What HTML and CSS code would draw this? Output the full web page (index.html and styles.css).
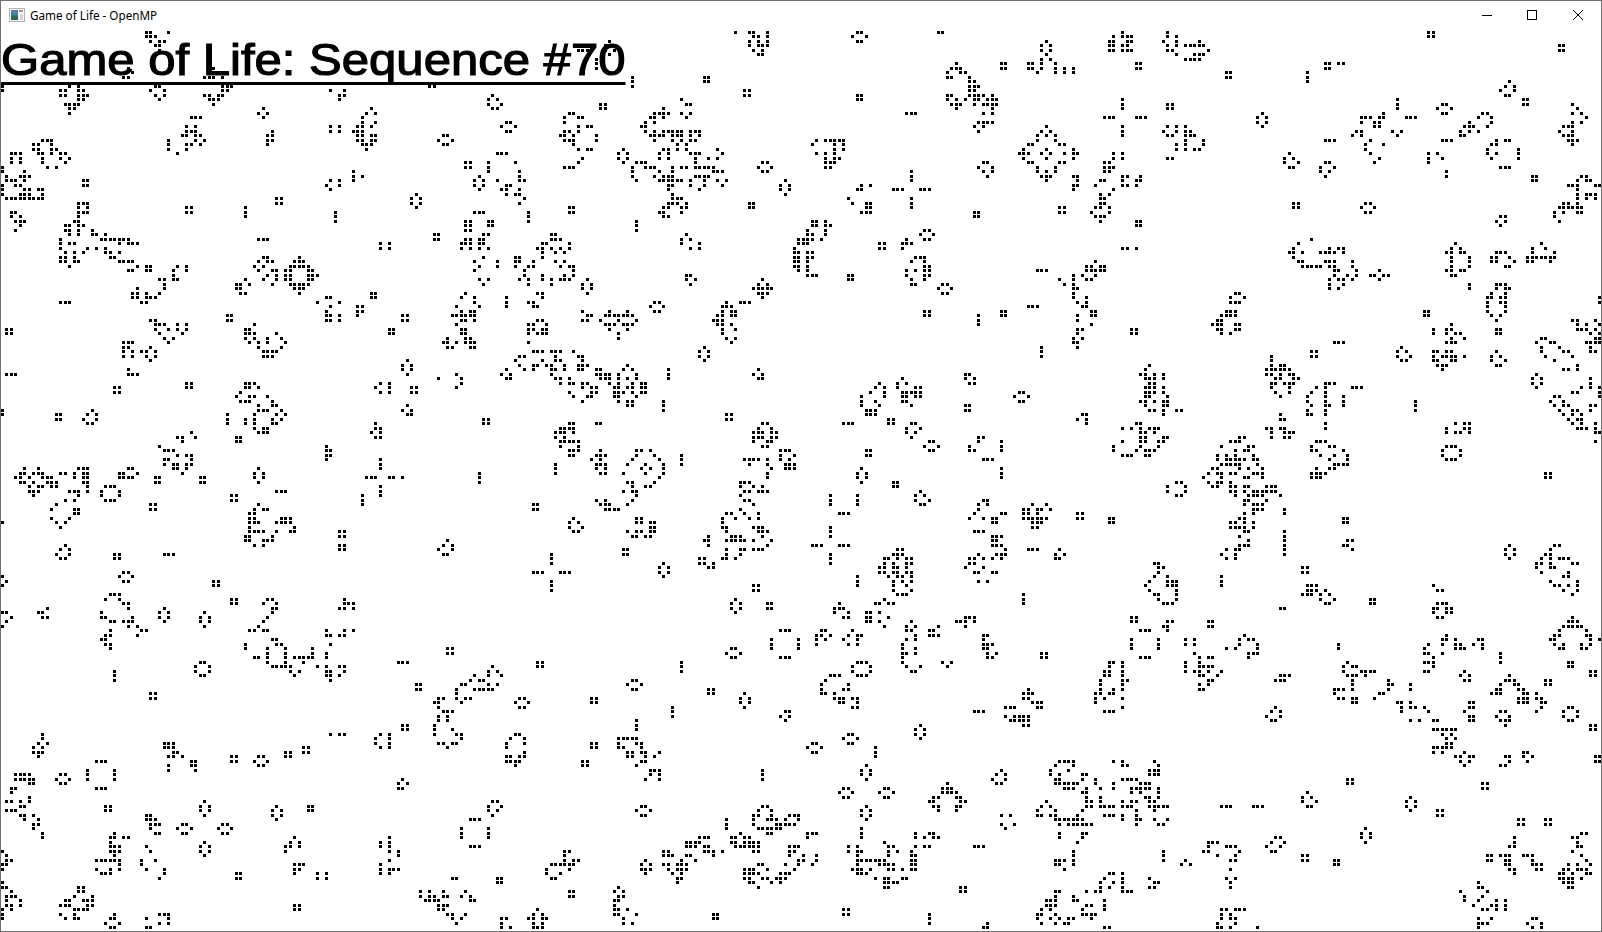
FILE: index.html
```html
<!DOCTYPE html>
<html lang="en">
<head>
    <meta charset="UTF-8">
    <title>Game of Life - OpenMP</title>
    <link rel="stylesheet" href="styles.css">
</head>
<body>
    <div class="window">
        <div class="titlebar">
            <svg class="app-icon" width="16" height="16" viewBox="0 0 16 16">
                <rect x="0.5" y="1.5" width="15" height="13" fill="#f4f4f4" stroke="#b4b4b4"/>
                <rect x="2" y="3" width="7" height="10" fill="#3c7f80"/>
                <rect x="2" y="3" width="7" height="4" fill="#5a7fa8"/>
                <rect x="2" y="9" width="7" height="4" fill="#2f6a55"/>
                <rect x="10" y="3" width="4" height="2" fill="#8a9aa8"/>
                <rect x="11" y="7" width="3" height="6" fill="#d4d4d4"/>
            </svg>
            <span class="window-title">Game of Life - OpenMP</span>
            <div class="controls">
                <svg width="10" height="10" viewBox="0 0 10 10"><path d="M0 5.5H10" stroke="#000" fill="none"/></svg>
                <svg width="10" height="10" viewBox="0 0 10 10"><rect x="0.5" y="0.5" width="9" height="9" stroke="#000" fill="none"/></svg>
                <svg class="close" width="10" height="10" viewBox="0 0 10 10"><path d="M0 0L10 10M10 0L0 10" stroke="#000" stroke-width="1" fill="none"/></svg>
            </div>
        </div>
        <div class="stage">
            <canvas id="board" width="1600" height="900"></canvas>
            <h1 class="heading">Game of Life: Sequence #70</h1>
        </div>
    </div>
    <script src="cells.js"></script>
</body>
</html>
```

FILE: styles.css
```css
html, body {
    margin: 0;
    padding: 0;
    background: #fff;
    overflow: hidden;
}
.window {
    width: 1602px;
    height: 932px;
    box-sizing: border-box;
    border: 1px solid #707070;
    display: flex;
    flex-direction: column;
    background: #fff;
}
.titlebar {
    height: 30px;
    box-sizing: border-box;
    padding: 0 0 2px 8px;
    display: flex;
    align-items: center;
    font-family: "Noto Sans", sans-serif;
    font-size: 11.7px;
    color: #000;
}
.app-icon {
    margin-right: 5px;
}
.controls {
    margin-left: auto;
    display: flex;
    gap: 35px;
    padding-right: 18px;
}
.controls svg {
    display: block;
}
.controls .close {
    margin-left: 1px;
}
.stage {
    position: relative;
    width: 1600px;
    height: 900px;
}
#board {
    display: block;
}
.heading {
    position: absolute;
    left: 0;
    top: 3px;
    margin: 0;
    font-family: "Liberation Sans", Arial, sans-serif;
    font-size: 45px;
    font-weight: normal;
    line-height: 52px;
    color: #000;
    -webkit-text-stroke: 1.2px #000;
    text-decoration: underline;
    text-decoration-thickness: 3px;
    text-underline-offset: 7px;
    text-decoration-skip-ink: none;
    white-space: nowrap;
    transform: scaleX(1.09);
    transform-origin: left top;
}
```

FILE: cells.js
```js
// live cells as read off the reference, one block per 534x451 crop
// each entry is "rows:cols", both in crop pixels, every row gets every col
var KX = 2.936, KY = 3;
var PITCH = 4.5, COLS = 356, ROWS = 200;

var crops = [
{ x: 0, y: 30, d: `5:433,445,500 20:433,445,460 33:445,470,485 47:460,472 60:472 113:378 128:390 142:365,378 113:632 142:605,618,632,658
170,183:5 170:207,234 183:180,193,234,247 196:180,193,234,247,260 210:234,247 223:193,207,220,234 237:207,220 250:207
170:460,472 183:445,485 196:460,485 210:472 170:658,672,685 183:658,672 196:605,618,645,658 210:618,632,645 223:632
183:978,1005 196:992,1005 210:992 170:1258,1270 196:1443 210:1430,1458 223:1430,1470 237:1443,1458 237:778 250:765,792 264:778
237:1085 250:1072,1098 264:1058 278:1058,1098 291:1045,1058,1085 305:1032,1045,1058 318:1045,1058,1085,1098 332:1045,1058,1085,1098 345:1058,1072,1085 358:1072
264:565,578,592 291:552,578 305:552,565,578 318:538,552,578,592 332:578,605 345:552,565,592 358:552 332,345,358:500 372:526 291,305:978,992
305:805 318:792,805 332:792,805 345:792 277:1483,1497 291:1470,1510 305:1483,1497 318:1297,1310 332:1283,1323 345:1297,1310
332:128,141,155 345:101,114,155 358:101,114,155,168 372:114,128,155,181,194 385:128,181,207 399:128,194 412:141,168 372:35,48,62 385:35,62 399:35,62
372:1458,1470,1484 399,412:1365,1378 399,412,425:1431 399:1510 412,425:5 425:75 438:22,62,75,88 452:22,35,48,75 465:48,62 478:75,88,114,128 492:62,75,88,128 507:22,35,48,62,75,88,101,114,128
465,478,492:5 452,465:248,260 425:1044 438:1032,1058 452:1044 452:978,992 465:965,992 481:978 425,438:1522 452:1522,1535
438:1403 452:1390,1418,1458 465:1390,1418,1484,1497 481:1403,1470,1484,1522 492:1484,1510,1522 507:1535 520:1522 507,520:818,832 492:1217 507,520:1205,1232 535:1217
520:234,247,260 535:234,260 548:234,247,260 562:234 575:220,234 590:194,207,234,247 602:194,207,234,273 617:207,234,273,286,312 628:181,300,312,326,339,352,365,378 642:181,207,220,352,378,392,405 655:181,260,286,312 670:194,220,247,312,326,352 683:181,194,220,326,339 697:181,194,220,234,352,365,378,392 710:207,405
548:35,48 562:35,62 575:48,62,75 590:62 602:48 535,548:552,565 535,548,562:726 548,562,575:990 548:1390,1403,1417 548,562,575:1548
575,590,602:1365,1378 575,590:1431,1444 617,628:1270,1283 617:1418,1431 628:1365,1378,1405,1418 642:1352,1365,1378,1405,1418 655:1352,1378,1405,1431 628:765,778,792 642,655:1123,1137
683:778,792,885 697:765,792,805,871,885,898 710:752,778,858,871,885,898,912 724:765,805,818,845,858,912,925 737:792,818,845,858,912,925,938 750:778,818,845,858,912,925 763:805,858,871,885,898,912 777:871,885,898 790:885
750:726 763:698,712,738 777:698,712 790:712,726 683:1510,1522 697:1510,1522,1560 710:1510,1548,1560 724:1535 737:1535 750:1522,1548 763:1548 683:1417 697:1390 697,710:1457 710:1403 724:1390 750:1403,1431 763:1417
710:525,552 724:512,552 737:512 750:472,485,512,525 763:485 777:485 790:472 777:405 790:392,405,432 804:392,405,432,445,458 817:418,432 710:432,445 724:378,392,432,445 790,804:1085,1098 817:181,194,207
804:965,978 817:938,992 832:978 845:952 858:952,978,992 871:965,978,992 832,845:1045,1058 858:1045 790:1364 804:1350,1390 817:1390 832:1337,1403 845:1350,1377,1390 858:1324,1337,1350,1364,1377,1390 871:1350,1364,1390
885:1337 898:1350,1364 912:1350,1364 925:1310,1364,1377 940:1297,1310,1337,1364,1377,1390 952:1310,1324,1377,1390 804,817,832:1484 817:1548,1560 832:1560 858,871:672,685 858,871:1178,1190 898,912:22,35 898,912:1137,1150
871:445,458 885:458,472,485,526,552 898:458,498,526,552 912:472,538 925:485,512 940:498 885:752 898:726,738 912:726,738,752,818 925:726,752,792,832 940:738,765,792,845 952:765,832 966:778,792,805,818 979:778,792,805
885,898:1548,1560 912:1548 940:1548 940:365,378,392 952:365,378,445 966:365,392,418,432,458 979:365,392,432,458 993:445 979:1522,1535 966:1560 993:1510 1006:1522,1560 1020:1535,1560
993:1190 1006,1020:1178,1205 1033:1190 1020:378 1033:378,392,405 1033:22,35,48 1020:1484 1033:1470,1497 1047:1484,1497 1033:1337 1047:1350,1284 1060:1350 1075:1337 1060,1075:552,565
1060:726,738,752 1075:726,738,765 1089:712 1102:698,738,752,792 1115:712,726,738,805 1130:765,805,818 1142:765,778,792,832 1156:672,752,818,845 1170:672,726,752,805,832 1183:672,726,752,805,818 1196:752,778,792 1210:765,778,792
1060:1123,1137 1075:1110,1150 1089:1123,1137 1075,1089:1205,1217 1075,1089:340,352 1142,1156:5 1156,1170:165,180 1142:273 1156:260,286 1170:247,286 1183:260,273 1128:1190 1142:1178,1205 1156:1190,1205 1170,1183:1418,1431
1183:1110 1196:1098,1123 1210:1085,1123 1222:1098,1110 1210:565 1222:526,538,578 1237:538 1222,1237:698,712 1250:472 1264:485,498,512 1277:526,552,565 1290:485,498,565 1303:485,512,526,552,565 1317:512,526,552 1330:538
1250:965 1264,1277:952,978 1290:965 1290,1303,1317:1123 1317:75,114 1330:62,75,101,114,128 1345:48,62,88,128,141,155 1330:180,194,220,248,260 1317:234,248,260 1345:220,248,260 1317:378,392 1330:352,365,405 1345:352,365,378,392 1345:458,472,592,605
1317:765 1330,1345:752,778 1345:1072,1085,1098,1150,1163,1178 1330,1345:1402` },

{ x: 534, y: 30, d: `5:595,632,645,685 20:645,658,685 33:632,658,685 47:632,658,672,685 60:645,672 75:658,672 5:952,965 20:938,978 33:952,965 5:1190,1205
35:221 48:208,233 60:127,141,155,208,233 75:221 87,100,113:180 140,155,168:286 140,155:500,513 183,196:620,632 196,210:952,965 223,237:195,208
100:1243 113:1230,1243,1258 128:1217,1258,1270 142:1217,1230,1283 156:1283,1297 170:1283,1297,1310 183:1283,1297 196:1217,1230,1283,1297,1310,1324,1352 210:1217,1243,1270,1297,1310,1337,1352,1365 223:1230,1243,1258,1297,1324,1337,1352,1365 237:1243,1352 250:1324,1352 277:1310,1324,1337,1352 291:1297,1324 304:1310 250:1098,1110,1125
33:1510 47,60:1497,1524 75:1510 87:1497,1524 100:1458,1470,1497,1537 113:1458,1470,1497,1537,1563 128:1484,1537,1563 100,113:1378,1390
210:432 223:445,458 237:378 250:352,365,378,392,432,458 264:340,352,378,445 277:326,352 291:312,326 304:326,352,378,392,405,418,432,458,472,485 318:340,352,365,378,405,418,432,458,485 332:352,405,432,458,472 345:418,445 358:378,392,418,445,538 372:365,392,458,472,485,552 385:365,392,472,512,538 399:300,312,326,472 412:286,326,340,352,405,432,445,472,485,498,512,526 425:286,365,405,526,538,552 438:286,352,378,392,405,472,485,498,512 452:300,365,378,392,405,418,432,458,498,538,565 465:392,405,458,498,552 481:392,485 492:405 507:405,418,432 520:392,405,418,445 535:378,392,432,445 548:365,378,432 562:378,392
358:260 372,385:247,273 399:260
250:101,114 264:88,128,141 277:88 291:128,155,168 304:88,101,128 318:75,88,114,180 332:88,101,114,180 345:114 358:128,155,168 385:141 399:128 412:88,101,114
332:832,858,871,885,898,912 345:818,885,912 358:885,912 372:832,858,885 385:858,885,898 399:858,871,885 412:858,871 399:672,685 412:658,698 425:672,685 399:1324,1337 412:1310,1350 425:1324,1350 438:1337
291:1510 304:1497,1524 318:1484,1510,1537 332:1484,1537 345:1458,1470,1550,1563 358:1444,1510 372:1431,1444,1458,1497,1524,1563 385:1444,1510 399:1458,1470,1550,1563 412:1484,1537 425:1484,1510,1537 438:1497,1510,1524 452:1510
425,438,452:1110 481:1058,1072,1085,1137,1150,1165 507,520,535:1110 452:738 465,481:725,752 492:738 465:965,992 481:952,965 507:925 520:938,978,992 535:978,992 548:965,978,992 520,535:632,645 535,548:101,114 548,562:1297,1310 535,548:1550,1563 575,590,602:300
575:818,832,858 590:818,832,858,871 602:805,858 617:805,818,858 628:778,792,805,818,845 642:778,792,805 655:765 670:765,778,805,818 683:765,778,805,818 697:765,778,805 710:765,778,805 724:778,805 737:805,818,832
602:1150,1165 617:1137,1178 628:1098,1150,1165 642:1085,1098,1110 655:1085 642,655:1018,1032
617:48,62 628:48,62,75 642:22,35,101 655:8,22,48,75,101 670:22,62,88 683:22 697:62,88 710:75,101,114 724:114 737:22,88,114 750:22,48,75,88,101 763:48 617:445 628:432,458 642:432,485 655:458,485
683:1125,1137,1150 697:1110,1150 710:1150,1165 724:1098,1125,1150,1165 737:1098,1150,1165 750:1110,1150 763:1110,1125 737,750:925,938 724:1484,1497,1510 750:1550 763:1563 737:445,458 750:445,472 763:458
750:155 763,777:141,168 790:155 750:672 763:658,685 777:645,658,672,685,698 790:658,672,685 804:672 763:1205,1217 777:1190,1232 790:1205,1217 790:8,22 804:22 832:8
817:568,605,618,632 832:552,565,578 845:552,578,592 858:538,552,578,592 871:525,538,552 885:538,552,578 898:552,592 912:552 925:565,592 940:578 817:352,365 832:340,378 845:352,365 845,858:1150,1163 845,858:1378,1390 832:1458,1470,1484 858,871,885:1310
845:141,220,273 858:155,168,205,220,234,247,260,273,286 871:141,155,194,247,300 885:205,220,234,260,273,286 898:220,273 912,925:247 871:8,22 885:35 898:22,35 912:8,22,35
952:500 966,979:487,513 993:500 952,966,979:1497 966:8,22,48,62,75,115 979:62,128,141 993:22,62,75,141 1006:8,35,48,88,128,141,155 1020:48,62,88,128,141 1033:48 1047:62,75,101 1060:75,101,115,141,155 1075:141,168,180 1089:101,168,180 1102:115,155,168 1115:141
1006:273 1020:180,194,260,286 1033:180,194,207,220,247,300 1047:194,207,220,247,273,300 1060:220,247,285,312,326 1075:234,247,273,285,312,326 1089:234,247,260,285,312,326 1102:234,247,300 1115:247,273,285 1130:273,285 1020,1033,1047:393 1020:658 1033:645,672 1047:658,672
1033:1272,1285 1047:1272,1297 1060:1285,1297 1060:1018 1075:1005,1032 1089:992,1032 1102:965,1032 1115:965,1005 1130:965,1018 1142:978,992,1005 1156:978,992,1005
1047:1085 1060:1072,1098 1075:1072,1125,1137 1089:1085,1098,1110,1125,1137 1102:1085,1098,1125,1137 1115:1085,1098 1130:1110 1089:1430,1444 1102:1417,1457 1115:1430,1444 1130,1142:1272,1285 1115,1130,1142:380 1156,1170:568,580 1170,1183:1045,1058
1183:180,194,101,114 1196:75,88,101,114 1210:62,75,88,114 1222:62,88 1237:75,88,101,114,128 1250:75,128 1264:101,114,128 1277:101,114 1183:672,685 1196:658,698 1210,1222:645,658,672,698,712 1237:645,685,698 1250:672,685 1183:912,925,938
1183:1110,1125 1196:1098,1137 1210:1098,1125 1222:1110 1222:1310,1324 1237:1310,1378 1250:1285,1378 1264:1285,1297,1378 1237:1165,1178 1250:1150,1190 1264:1165,1178
1264:308,322,340 1277:300,352,433 1290,1303:433 1264:195 1277:180,195,208 1290:168,195 1303:180,195,208 1317:180,208 1330:195,208 1290:285,367 1303:272,327,380 1317:312,340,380 1330:260,327,380 1345:367 1303,1317,1330:60
1264:725,738,752 1277:725,765 1290:618,632,645,658,685,725,752 1303:632,685,738,752,765 1317:698,738,752,765 1330,1345:685 1264,1277:978,992 1290:1324,1337,1352 1317:965 1330,1345:952,978 1317,1330,1345:1378` },

{ x: 1068, y: 30, d: `5:168 20:141,155,181,194 33:128,141,181,194 47:128,141,168,181 60:128,141,155,168,181 5:290 20:290,315 33:275,326,380 47:290,326,340,352,367,380,395 60:290,300,408 75:326,367,380,395 87:340,352,367,380
5,20:1058,1072 47,60:1447,1458 100,113:195,208 113,128:10 128,142:462,475 128,142,156:700 100,113:752,765 100:792,805 156:1298 170:1285,1310 183:1272,1310 196:1285,1298 210,223:1340,1352
210,223,237:168 264:115,128,141,195,208,222 291,305,318:168 223,237:290,300 250:568 264,277:553,580 291:568
210,223,237:967 250:925 264:858,872,888,912,925,992,1005,1020 277:858,898,912 291:898,912 305:845,858,952,978 318:832,858,967 332:752,765,780,888 345:872,925 358:872 372:888 385:912 399:898
223:1098,1112 237:1085,1125 250:1098,1112 223:1484 237:1497 250:1484,1510 264:1525 277:1484,1510 291:1458,1470,1484 305:1445,1484 318:1458,1470,1484 332:1470,1484,1497 345:1484
250:1218,1232 264:1205,1245 277:1178,1245 291:1165,1178,1190,1232 305:1152,1178,1205 318:1152,1165 332:1098,1112,1125
291:290,326,340 305:275,326,340,352 318:290,300,340,352,367 332:340,395 345:315,340,395 358:326,352,367,380 332:1258,1285,1298 345:1245,1258 358:1232,1325 372:1232,1258,1325 385:1245,1325 412:1272,1285,1298
358:10 372:10,22 385:10 372:141,155 385:141,168,290,300 399:115,128 412:115,128,141 425:115,128 372:648 385:635,662 399:635,675 412:648,662 399:752,765 412:740,780 425:740,765 438:752
372:1058,1085 385:1058,1098 399:1058 425,438:1112 438,452:1365,1378 438:10,22 452:35 465:10,35 481:22
438:168,181,208 452:101,115,168,195,208 465:88,155,168,195 481:141 492:101,128 507:101,115 520:101,115 535:88,101,128 548:75,128 562:88,101,115 575:101
438:1510,1525 452:1497,1525,1538 465:1470,1484,1497,1550,1563 481:1497 492:1497,1525,1538,1550 507:1497,1525,1550 520:1458,1470,1497 535:1445,1458,1470,1484,1497,1510 548:1430,1458,1497,1510 562:1430 575:1445
520,535:662,675 520:872,885 535:858,898 548:872,885 562:1270,1285 575:1258,1285 590:1270 575,590:195,208
628:715 642:675 655:662,768,792,805 670:648,662,688,740,752,768,780,805 683:662 697:675,688,752,768,780,832 710:688,700,715,727,740,768,780,832 724:780,795,845,912 737:780,820,845,885,900,925,940 750:768,795,805,832,912 763:768,805 777:768,795 655:168,181,195
642:1140 655:1125,1152 670:1112,1125,1152,1165 683,697,710:1125,1178 724:1112,1125,1152,1165 737:1125,1140 670:1258,1272,1285 683:1245,1258,1298 697:1245,1258,1310 710:1285,1298
642:1392 655:1365,1405 670:1365,1430 683:1350,1365,1378,1392,1405,1418,1430 697:1350,1365,1418
697:88 710:62,75,101,115 724:62,75,88,101,115 737:10,48,88 750:22,62,75 763:22 777:22,35 790:22 804:22,62 817:35,62 832:48,62 845:75,88 858:35,75,88 871:35 885:75 898:35,48 912:35 925:22,48 940:22,35 952:35
763,777:1178 763:1258,1272,1285 777:1258,1285,1298 790:1245,1285 804:1232,1245,1272,1285 817:1232,1272,1285 832,845:1232,1285 858:1245,1272 871:1258
790:488,500 804:475,515 817:475,488,500 845:462,475,488 858:448,462,475,488 871:435,448 885:422,435,448,488,500 898:435,448,488,500 912:448,475 845,858:1045,1058 898,912:182,195 804,817:1563
885:1125 898:1072,1112,1125 912:1072,1112,1138,1152 925:1125,1165 940:1112,1125,1140 898,912:1258,1272 871:1484,1497,1550 885:1497,1525,1563 898:1497,1510,1525,1550 912:1538,1563 925:1550,1563 940:1525,1538,1550,1563 952:1538 966:1538,1550 940:780,792,805
925:1392,1405 940:1378,1418,1430 952:1392,1445 966:1392,1458,1470 979:1405,1484 993:1430 966,979:715,727 952:978 966:967,992 979:967,1005 993:978,992
966:1072,1085,1112,1125 979:1072,1098,1112,1125,1140,1165 993:1072,1085,1125,1140 1006:1085,1098,1112 1020:1098 966:1258 979:1245,1272 993:1245,1285 1006:1258,1272
979,993:595 1006:595,620,635 1020:580,595,608,620,635,648 1033:580,595,620,648,662 1047:608,620,662,675 1060:595,608,635,648,662 1075:595,648 1089:608,648 1102:620
1006:1497 1020:1458,1470,1497 1033:1378 1047,1060:1365,1392 1075:1378 1047,1060:1538 1075:1510,1538,1563 1089:1484,1497,1563 1102:1430,1445,1563 1115:1418,1458 1130:1430,1458,1470,1538,1550 1142:1445,1484,1497,1538 1156:1458,1484,1510 1170:1470,1497,1510 1183:1484,1510,1550 1196:1497,1510,1525,1550 1210:1550,1563 1237:1550
1006:237 1020:222 1033:208,222,260,275 1047:222,237,260,275 1060:237,260 1075,1089:222,237,260,275 1102:222,237,290 1115:208,222,260,275,290 1130:222,275,290 1142:237,250,275,315,328 1156:275 1156:48,62 1170:35,62 1183:62
1060:752,765,780 1075:727,752,832,845,858 1089:715,752 1102,1115:700,752,805 1130:715,752,765,805 1142:700,752 1156:700,715,752 1183,1196:752 1156:620 1170:620,635 1196:580,595,620,635 1210:595,635,648,662 1222:595,635,648 1115,1130,1142:1020
1183:1140,1165,1178 1196:1112,1165,1178 1210:1112,1140,1152,1178 1183:195,208 1196:168,182,208,237,250,262 1210:208,222,250 1222:208,222,275,290 1237:155,208,222,262,275 1250:141,208,262 1264:141,195,222,235,250 1277:155,168,182,222,235
1222:500,515 1237:475,488,500 1250:448,525,540 1264:488,515,525 1277:435,462,488,540 1290:435,462,475,488,500,515,540,553 1303:448,462,475,488,500,553 1317:422,435,500,525,565 1330:408,435,448,475,488,540,553,565 1345:395,448,515,525,565
1237:727,740,752 1250:715,765,780 1264:715,727,805 1277:740,780,820 1290:765,820 1303:780,792,805,820 1317:727,765,780 1330:715,727,740,752 1345:715,727,740 1250:1112,1125,1140 1264,1277:1098,1152 1290:1112,1125,1140 1330,1345:1405,1418` },

{ x: 0, y: 481, d: `5:62,75,101,140,155,168,248,260 18:88,114,128,155,168,260 31:88,101,114,207,220,234,260 45:101,234 58:194,220 18:312,326,340 31,45:300,352 58:312,326,340 5:460,472,592,605,765,1402 31:818,832,845 18,31,45:1123 45,58,72:1070 45,58:685,698
72:165 85:155,220,234 99:220,234 113:155,207 127:165,194,8 140:180 72,85:445,458 72:765 85:752,778,792 99:738,752 113:738,752,832,845,858 127:738,752,765,818,832,845,858 140:738,870 154:738,752,765,778,818,858,870 167:725,738,805 181:725,738,778,792,805 194:752,778
154,167:992,1005 194,208:992,1005 181:1310 194:1297,1324 208:1285,1324 220:1297,1310 194:192 208:180,207 220:165,207 235:180,192 220,235:340,352 220:485,498,512 72,85:1563 275:1563 275:365,378 290:352,392 302:365,378 290:8 302:22 316:8 302,316:632,645
343:325,340,352 356:312,352 370:365,378 383:378 383:140 397:114,128 409:128,140 397:8,22 409:35 423:22 437:8 397:300 409:300,312,392 423:325,340,365,378,392 437:378,405 452:418,432,325 465:405,312,325 478:300,312 491:312,325 505:325 356,370:685,698
356:792,805 370:778,818 383:805,818 397:805 409:792 423:778 437:765 452:738,752,778,792 356:1018 370:1005,1018,1032 383:992,1005,1032 383:485 397,409:472,500 423:485 397:605 409,423:592,618 437:605
452:965,1018,1032 465:965,978,992,1018 491:978 478:805,818 491:725,818,832 505:725,792,845,925 518:792,845,925,952 532:752,765,792,845,872,885,898,912,925,952 545:792,845,898 558:805,818,832,845,858,938,952,992,1005 571:858,885,952,965,1005 585:872,965,978,992 598:978 505,518:1310,1324 545:1165,1178,1190
545:592,605 558,571:578,618 585:592,605 571,585,598:340 558:1444 571:1431,1458 585:1390,1431,1470 598:1378,1405,1418 612:1350,1365,1431,1458 625:1337,1390,1405,1418,1431,1444 640:1337 652:1285,1297,1337,1365,1378 665:1272,1285,1350 678:1285 692:1297,1310,1324 705,720:1285,1310 733:1270 747:1270,1324 760:1270,1337,1350 774:1350 787:1285,1297,1324,1337 800:1310
612,625:1218,1231 638,652:445,458 733,747:1178,1190 652:1522,1535 665:1510,1550 678:1522,1535 760:978,992,1005 760,774:128 787:114,140 800:101,128 814:101,114,128 828:114
787,800:485,498,512 814:512,526 828:498,512,538 841:565,578 855:500,565,578 868:500,578 760:1123,1137 774,787:1110,1150 800:1123,1137 760:1510,1522 774:1497,1535 787:1484,1535 800:1484 814:1535 828:1484,1497,1522,1535 841:1484,1497,1510,1522 855:1510
800,814:898,912 814,828:845,858 828,841:685,698 828:765,778 841:752,792 855:765,778 841:286,300,314 868,882,895:260,340 922:286,300,314 882:48,62,75,88 895:48,62,75,88,101 908:88,101 922:35,48 936:35 949:88 963:22,35,62,88 976:62,75 990:22,35,48 1003:62,75,101 1017:75,114 1030:101,114 1044:101 1057,1071:128
882:180,193 895:165,207 908:180,193 895:1178 908:1165,1190 922:1165,1178 976,990:312,326,912,925 963:605 976,990:592,618 1003:605 976:818 990,1003:805,832 1017:818 963:1444,1458 976:1431,1470 990:1431,1458 1003:1444
1003:432,445 1017:432,445,458 1030:445,458,472 1044:445 1057:458,472 1030:538,552,658,672 1044:526,565,645,685 1057:538,552,658,672 1017:1378,1390,1403 1044,1057,1071:1350,1431 1098:1378,1390,1403
1057:340 1071:325,340,365,378 1084:325 1098,1111:325,340,352 1125:340 1138:286,300,312,325,340,352 1152:352 1165:286,325,352 1179:300,312,325 1098:432 1111:445 1138:418,458 1152:418 1165:432,485 1179:485 1192:472 1084:605 1098,1111:592,618 1125:605
1071:870 1084:858,885 1098:845,858,885 1111:845 1071:1137 1084,1098:1123,1150 1111:1137,1165 1125:1165 1138:1137 1152:1123 1165:1123,1137,1150,1165 1179:1123,1150 1111:8 1125:22 1138:22,35 1152:8,22 1165:8
1152:870,885,898 1165:870,885 1179:870 1179,1192:698,712,938,952 1192:1324,1337 1192,1206:1458,1470 1206:8 1219:8,22,234,248 1233:35,234,248 1246:22,35,48,220,272 1260:22,62,192,205,248,260,272 1273:22,35,62,180,192,205,260,272 1287:35,218,234,248,260 1300:180,218 1314:192,218,234 1287,1300,1314:8
1233:1232,1258,1297,1364 1246:1232,1258,1270,1297,1310,1350,1377 1260:1245,1258,1270,1285,1377,1390 1273:1285,1297,1310 1287:1285,1297 1300:1310,1324,1364 1314:1324,1350 1327:1337 1273,1287:870,885
1300:340,472,485,500 1314:325,340,432,500 1327:312,352,472,500 1341:325,340,432,445 1300:1560 1314:1470,1484,1550,1563 1327:1470,1560 1341:1470,1497,1560` },

{ x: 534, y: 481, d: `5:273,286,352 18:286,326,340 31:260,286,300 45:300 58:180,207,286 72:193,207,220,273 85:207,220,234,248 72,85:8 5:605,618,632 18:605,645,672 31:618,632,658,672,685 45:605 58:618,632 72:645 85:605 99:566,578,618,658 113:552,592,632,658 127:552 140:552,566,645,658,672 154:566,658,672,685 167:578,592,605,672 181:566,578,592,605,618,645,698 194:685 208:566,605,618,645,658,672 220:566,605 235:552,566,592
5:965 5,18:1058,1072 45,58,72:873,952 99:900,912,925 31:1137 45:1125,1150 58:1125,1165 72:1137,1150
58:1325,1337 72:1310,1337 85:1310 99:1297,1378,1390 113:1285,1324,1350,1364 127:1350,1364 154:1297,1310,1324 167:1350,1364,1378 181:1350,1364 194:1350,1364,1378 208:1390 220:1310,1364,1378,1390 235:1285,1297,1324,1350,1378 248:1285,1297 261:1272,1324 275:1297,1310,1350,1364 300:1310,1337
72:1470,1510 85:1444,1458,1484,1497,1524 99:1444,1458,1484 113:1444,1458,1470,1484,1497,1510 127:1470,1484,1497 140:1470,1484 208:1457,1470,1484,1550 220:1537,1563 235:1537,1550
113:116 127:101,128 140:101,141 154:116,128 113:300,314 127:300,314,340,352 140:340,352 154:272,300,314,340,352 167:286,300,326,340 167:512 181:498,512 194:512 208,220:260,273
140,154,167:873 194:820,833,847,900,912,925 220,235,248:873 220,235,248:48 275:8,22,75,88,101 300,314,327:48 248:380 262,275:368,395 289:380 235:485,498 248:485,498,526 262:512,526
208:1072,1085 220:1058,1072,1085 235:1032,1045,1072,1098,1112 248:1032,1058,1098,1112 262:1018,1032,1058,1072,1098 275:1018,1032,1058,1072,1098,1112 289:1045,1072,1085,1112 302:1058,1085,1112 316:1058,1098 330:1058,1112 343:1072,1085,1098 289,302,316:952 316,330:645,658
356:595 370,383:580,607 397:595 370,383:685,698 356:1032 370:1005,1018,1045,1058 343,356,370:1444 370:900 383:885,900,912 397:885,925 409:912,925 397:980,992,1018 409:980,992,1045 423:980,992,1018 437:1032 409:1272,1285,1297 423:1245,1258,1272,1297 437:1272
423:1110 437:1098,1125,1190 450:1098,1110,1165,1178 463:1125,1165,1178,1190 478:1098,1125 491:1085 505:1085,1125 518:1085,1098,1125 532,545:1085 558:1098,1137 571:1112,1125 450:725,738,752 478,491,505:698,778 532:725,738,752
450:845,858 463:832,845,872 478:832,858 491:832 450:938 463:925,952,965 478:912,952 491:925,952 463:1325,1337 478:1325 491:1325,1337,1352 505:1325,1337 518:1337,1365 532:1337,1352 505:580,592 518:567,605 532:580,592 518,532:1497,1510 545,558:8,22 545,558,571:433
545:952,965,978 558,571:938,992 585:952,965,978 545:1205,1232 558:1217 585:873,887,900 598:858 612:847,925 625:847,912,925 640:847,858,887 652:887,900,912,938,952 665:900,912,952 678:938,952 598:287,300 612:273,314 625:287,300 625,640:512,526 638:620 652,665:607,633 678:620 652,665:168,180 678,692,705:405 692:738,752 705:725,752 720:738
625:1457 640:1444,1457,1470 652:1444,1457 665:1470,1484,1497 678:1390,1404,1417,1484,1497 692:1297,1310,1325 705:1390,1417,1430,1444,1457 720:1404,1417,1430,1444,1457 733:1444,1457 720,733,747:300 733:1137 747,760:1125,1150 774:1137 760:925,938 774:912,952 787:925,938
774:247,260,273,287,300 787:247,300,314 800:247,260,314 814:273,287,314,326,367 828:273,287,326,352 841:314,326 855:300 868:340,352,367 882:340,367 895:326,367 787,800:168,180 841,855:141,155 787:820,833 800:807,847 814:820,833 800,814,828:1005 868,882,895:672 855:980 868,882:967,992 895:980
841:1550,1563 855:1537 868:1524 882:1524,1550 895:1537,1550 908:1537,1550,1563 922:1563 868:1378 882:1365,1390 895:1352,1390 908:1365,1378 908:1217 922:1205,1217,1230 936:1205,1217,1230,1245 949:1178,1190,1245,1258 963:1165,1178,1258,1272 976:1178,1190,1245,1258 990:1190,1245
922:912,925,1032,1045 936:900,938,1018,1058 949:912,925,1032,1045 976:314,326 990:300,340 1003:314,326 976:978 990,1003:965,992 1017:978
976:672,685 990:658,698 1003:645,658,698,752,765,778 1017:645,685,698,712,738,778 1030:645,712,725,738,752,765 1044:658,672,685,698,712,725 1057:685,698,805,820,833 1071:805 1017,1030,1044:568 963:1510 976:1497,1524 990:1484,1537 1003:1484,1497,1524,1537 1017:1537,1550,1563 1030:1550 1003:1378,1404 1030:1378,1417 1044:1390
1044:965 1057:965,1125,1165,1178 1071:965,1125,1152,1178,1190 1084:1032 1098:925,952,1045,1058,1125,1152,1165 1111:925,952,965,1045,1072,1112 1125:952,1045,1112,1125 1138:952,965,978,992,1005,1018,1032,1112,1125 1152:952,1018,1032,1045,1058,1112,1125 1165:938,952,965,992,1045,1058,1085,1112,1125 1179:952,965,978 1192:1005,1032,1045,1085,1098 1206:1032,1045,1058,1072 1219:1032,1045 1098:1297,1310,1325 1057,1071:1550
1071:485,498,512 1084:445,458,472,485 1098:445,458,472,498,512 1111:498,512,526,552 1125:445,458,526 1138:432,472 1111:380,392 1125:380,392,405 1152:380,392,418,432,445 1165:392,418,432,445 1179:405,432 1192:418,432 1206:418 1057:605 1071:580,592,618,632 1084:580,592,618,632,645,658 1098:592,605,618,632,645,658 1111:645,658
1098:752,765,778 1111:752,765 1125:752,792,832 1138:778,792,832 1152:658,672,738,778,820 1165:620,632,645,685,765 1179:620,632,645,658,725,738,752 1192:620,632,672,685,712,725,738 1206:632,645,698,725 1219:658 1111:88,101 1125:88 1138:88,114,128 1152:48,62,75,88,101,114 1165:35,101 1179:35,75 1192:48,62 1138:326 1152:314,340 1165:314,326,340 1179:326
1219,1233:1258,1272 1233,1246:101,114 1219:248 1233:234,260 1246:248,260 1260:234,248 1273:234 1287:234,248,273 1300:234,248,300 1314:260 1327:260,287 1300,1314:526,540 1287,1300:912,925 1300,1314,1327:1165
1233:1537,1550 1246:1537 1260,1273:1510,1524,1537 1287:1497,1524 1300:1484,1497,1537 1314:1484,1524,1550 1327:1497,1537,1563 1287:8 1300:22 1314:22,35 1327:22 1341:8,22 1327:1337 1341:1325,1337 1138:1537,1550,1563 1152:1537,1550 1165:1563` },

{ x: 1068, y: 481, d: `5:314,326 18,31:300,340 45:314,326 5:408,445,458,472 18:420,435,475,488,514,526,578,592,605 31:475,488,514,540,552,565,578,592,605 45:488,526,540,552,565,620 58:514,526,578 72:514,540,552,565 85:540,552,565,635 99:514,540,635 113:500,514 127:475,488,514,540 140:475,488,500,514,540 154:514,526,635 167:500,635 181:526,635 194:500,514,526,635 208:462,488,500,635 220:448,488,635 235:462,488
99,113:35,48 113,127:128,141 113,127:805,820 181:820,833 194:805,820 208:833 194:1299 208,220:1285,1312 235:1299
194:1432,1445 208:1418 220:1405,1418 235:1392,1418,1445,1458,1472 248:1378,1392,1418,1484,1497 262:1378,1418,1432 275:1392,1472 289:1458,1472 302:1418,1497 316:1432,1445,1472,1497 330:1458,1497 343:1484
248:248,262 262:262,275 275:262 289:248,300 302:235,287,300,314 316:222,287,300,326 330:235,326 343:248,262,326 356:262,314 370:275,287,300 262,275:688,700 289,302,316:447
316:700,714,727 330:700,714,727,752 343:688,700,714,740,765 356:740,778 370:752,765 316:1072 330:1085,1098 370:1085,1098,1112 383:1072,1085,1112,1125 397:1072,1112,1125 409:1085,1098 356,370:888,900 383:620,635 409,423:182,195 423,437:408,420 423:288,300 437:275,300 450:288 450:208,222,235 478,491,505:182,262 532:208,222,235 478,491:352,367
463:514 478:500,526,540 491:500,553 505:462,488,553 518:526,540,553 532:526 518:367 532:380,408,420 545:340,380 558:352,380,395,408,420 571:352,367,380,408,447 585:380,395,435 598:408,420 612:380,408 625:380,395
545:128,141,155 558:128,155 571,585:115,128,155 598:101,155,168 612:101,168 625:101,141,155 640:88,101,128,141 652:88,115,168 665:88 678:155 692:115,128,141 491,505:795 518,532,545:1272
545:820 558:805,832,845 571:805,858,872,888,900 585:820,832,845,872 598,612:832 625:778,792,805,832 640:778 652:792,805,832,845 665:832,845 585:620,635,648 598:605,620,635 598:940 612:940,952 625:940 640:912,925 652:900 612,625:1005
665:967,980,1005 678:980,1005,1020,1045 692:980,1058 720:1005,1032,1072,1085 678:607 692:594,620 705:580,620 720:594,607
463:1112 478:1098,1112,1140,1205,1218 491:1058,1098,1140,1152,1190,1218 505:1045,1140,1152,1165,1218 518:1045,1058,1098 532:1072 545:1045,1058,1072 558:1072 571:1045,1058 571:1165 585:1152,1178 598:1165,1178 545,558:1472,1484 571,585:1535,1550 598,612:1405,1418
585:1299 598:1285,1299,1312 612:1272,1312,1325 625:1258,1272,1325,1338 640:1245,1258,1272,1338,1352,1378 652:1325,1338,1352,1378,1392 665:1325,1338,1352,1392,1405 678:1392 692:1378 665,678:1180,1192 692:1165 705,720:1180,1192 678:1472,1485 692,705:1458,1498 720:1472,1485 692:1272,1285 705:1258,1298 720:1272,1285,1298 733:1285 733,747:1535,1550
747:1072,1085,1098,1112,1125,1140 760:1098,1125 774:1112,1140 787:1112,1125 800:1072,1085,1098,1112,1125 814:1072,1098 814:1165 828:1140,1152,1178,1192 841:1152,1178 855:1165 814:1338,1352 828:1285,1298,1338,1365 841:1298,1352 855:1272,1285 828,841:1550,1563
407:1485 423:1472,1485,1498 437:1458,1472,1485,1498,1512 450:1445,1525 463:1432,1445,1525,1538 478:1418,1432,1538,1563 491:1432,1458,1512,1538 505:1445,1458,1512,1525
841:8,22,141,155,248 855:22,155,168,262 868:8,235,248,262 882:48,62,235,248,262 895:48,88,155,168,182,195 908:8,22,35,88,141,208,222,235 922:8,22,62,101,141,182,195,208,222,235,262 936:48,62,182,208,262 949:62,101,222,235,262 963:62,75,101,155,182,195,235,248 976:62,75,101,115,128,141,155,168,182,235,248,262,275,290 990:48,195,248 1003:35,115,128,141,155,195 1017:8,22,35,48,168,195,208,248,290 1030:8,22,35,48,62,75,195,262,275 976:448,462,475,540,553,568
936:700 949:688,714 963:688,727 976:700,714 949:1005 963,976:992,1020 990:1005 895,908:820,833 908,922:1218,1232 990,1003:1085,1098 1017,1030:1325,1338,1405,1418 1044:873 1057,1071:860,888 1084:873 1057:48,62 1071:48 1084:35
1057:1510,1525 1071:1485,1498 1084:1498 1098:1498,1510 1111:1485 1125:1512 1138:1525 1152:1472,1498,1538 1165:1458,1472,1498,1512,1525 1179:1445,1458,1485,1525,1538 1192:1445,1458,1472,1485,1512 1206:1458,1472,1485 1219:1472,1485 1071,1084:1312 1098:1298,1312
1084:408,420,435 1098:408,462,475,488 1111:395,408,500 1125:435,488 1138:475,488 1071:607,620 1084:594,635 1098:580,620 1111:594,607 1111,1125,1138,1152:10 1111,1125,1138:275 1138:342 1152:328,355 1125,1138:688,700 1138,1152:778,792
1125:1232,1245,1272,1285,1298,1338,1352,1365 1138:1232,1245,1285,1298,1365 1152:1285,1298,1365,1378,1392 1165:1298,1312,1378,1392 1179:1312 1165:475 1192:462,488 1206,1219:475
1179:128,141,155 1192:115,155 1206:101,141,155 1219:101,128,155 1233:62,88,101,155,168,182 1192:235 1206:248,262 1219:235,248 1206:1205 1219:1205,1218 1233:1152,1232 1246:1165,1218 1260:1165,1205,1258,1285 1273:1192,1245,1258,1285 1287:1218,1232,1258,1285
1246:10 1260:10,22,115 1273:62,75,115 1287:48,115 1300:48,62,75,88 1314:8,22,75 1327:8 1287:448,462,488,500,515 1300:448,475 1314:448,475,488 1327:435,488 1341:115,128,435,448,475,553 1314:1205,1245 1327:1205,1218,1232 1341:1205 1314:1365,1378 1327:1352,1392 1341:1365,1392` }
];

var ctx = document.getElementById('board').getContext('2d');
ctx.fillStyle = '#000';

function drawCell(col, row) {
    ctx.fillRect(Math.floor(col * PITCH), Math.floor(row * PITCH), 3, 3);
}

function toCol(crop, x) {
    var col = Math.round((crop.x + x / KX - 2.5) / PITCH);
    return Math.max(0, Math.min(COLS - 1, col));
}

function toRow(crop, y) {
    return Math.round((crop.y + y / KY - 32.5) / PITCH);
}

crops.forEach(function (crop) {
    crop.d.split(/\s+/).forEach(function (entry) {
        var parts = entry.split(':');
        var lastRow = -1;
        parts[0].split(',').forEach(function (y) {
            var row = toRow(crop, y);
            if (row <= lastRow) row = lastRow + 1;
            lastRow = row;
            var lastCol = -1;
            parts[1].split(',').forEach(function (x) {
                var col = toCol(crop, x);
                // neighbours that round onto one column are still two cells
                if (col === lastCol && col < COLS - 1) col = lastCol + 1;
                lastCol = col;
                drawCell(col, row);
            });
        });
    });
});
```
